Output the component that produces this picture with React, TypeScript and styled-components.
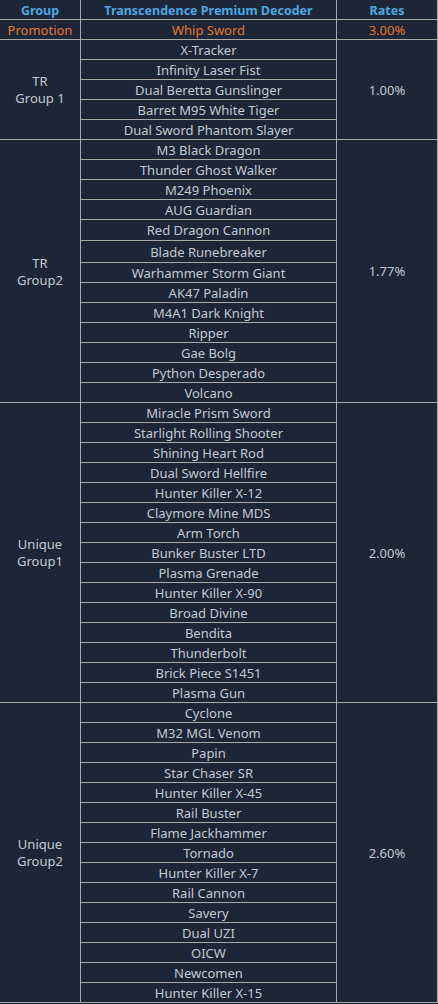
import React from "react";
import styled, { createGlobalStyle } from "styled-components";

const GlobalStyle = createGlobalStyle`
  html, body { margin: 0; padding: 0; background: #1c2637; }
  body { overflow: hidden; }
`;

const Wrap = styled.div`
  margin: -1px 0 0 -1px;
  width: 439px;
`;

const Table = styled.table`
  width: 439px;
  border-collapse: collapse;
  table-layout: fixed;
  background: #1c2637;
  font-family: "Noto Sans", "Open Sans", sans-serif;
  font-size: 13px;
  color: #c3c9d1;
`;

const Cell = styled.td<{ $h?: number; $tone?: "head" | "promo" }>`
  border: 1px solid #a9a9a9;
  padding: 1px 0 0 0;
  height: ${(p) => (p.$h ?? 19) - 1}px;
  text-align: center;
  vertical-align: middle;
  line-height: 17px;
  white-space: nowrap;
  font-size: ${(p) => (p.$tone === "head" ? "12.5px" : "13px")};
  font-weight: ${(p) => (p.$tone === "head" ? 700 : 400)};
  color: ${(p) =>
    p.$tone === "head" ? "#4ea6e0" : p.$tone === "promo" ? "#e8772e" : "#c3c9d1"};
`;

type Group = { label: string[]; rate: string; items: string[]; heights?: Record<number, number> };

const groups: Group[] = [
  {
    label: ["TR", "Group 1"],
    rate: "1.00%",
    items: ["X-Tracker", "Infinity Laser Fist", "Dual Beretta Gunslinger", "Barret M95 White Tiger", "Dual Sword Phantom Slayer"],
  },
  {
    label: ["TR", "Group2"],
    rate: "1.77%",
    items: [
      "M3 Black Dragon", "Thunder Ghost Walker", "M249 Phoenix", "AUG Guardian", "Red Dragon Cannon",
      "Blade Runebreaker", "Warhammer Storm Giant", "AK47 Paladin", "M4A1 Dark Knight", "Ripper",
      "Gae Bolg", "Python Desperado", "Volcano",
    ],
    heights: { 4: 20, 5: 21 },
  },
  {
    label: ["Unique", "Group1"],
    rate: "2.00%",
    items: [
      "Miracle Prism Sword", "Starlight Rolling Shooter", "Shining Heart Rod", "Dual Sword Hellfire",
      "Hunter Killer X-12", "Claymore Mine MDS", "Arm Torch", "Bunker Buster LTD", "Plasma Grenade",
      "Hunter Killer X-90", "Broad Divine", "Bendita", "Thunderbolt", "Brick Piece S1451", "Plasma Gun",
    ],
  },
  {
    label: ["Unique", "Group2"],
    rate: "2.60%",
    items: [
      "Cyclone", "M32 MGL Venom", "Papin", "Star Chaser SR", "Hunter Killer X-45", "Rail Buster",
      "Flame Jackhammer", "Tornado", "Hunter Killer X-7", "Rail Cannon", "Savery", "Dual UZI", "OICW",
      "Newcomen", "Hunter Killer X-15",
    ],
  },
];

export default function App() {
  return (
    <>
      <GlobalStyle />
      <Wrap>
        <Table>
          <colgroup>
            <col style={{ width: 81 }} />
            <col style={{ width: 256 }} />
            <col style={{ width: 101 }} />
          </colgroup>
          <tbody>
            <tr>
              <Cell $tone="head">Group</Cell>
              <Cell $tone="head">Transcendence Premium Decoder</Cell>
              <Cell $tone="head">Rates</Cell>
            </tr>
            <tr>
              <Cell $tone="promo">Promotion</Cell>
              <Cell $tone="promo">Whip Sword</Cell>
              <Cell $tone="promo">3.00%</Cell>
            </tr>
            {groups.map((g) =>
              g.items.map((item, i) => (
                <tr key={g.rate + item}>
                  {i === 0 && (
                    <Cell rowSpan={g.items.length}>
                      {g.label[0]}
                      <br />
                      {g.label[1]}
                    </Cell>
                  )}
                  <Cell $h={g.heights?.[i]}>{item}</Cell>
                  {i === 0 && <Cell rowSpan={g.items.length}>{g.rate}</Cell>}
                </tr>
              ))
            )}
          </tbody>
        </Table>
      </Wrap>
    </>
  );
}
